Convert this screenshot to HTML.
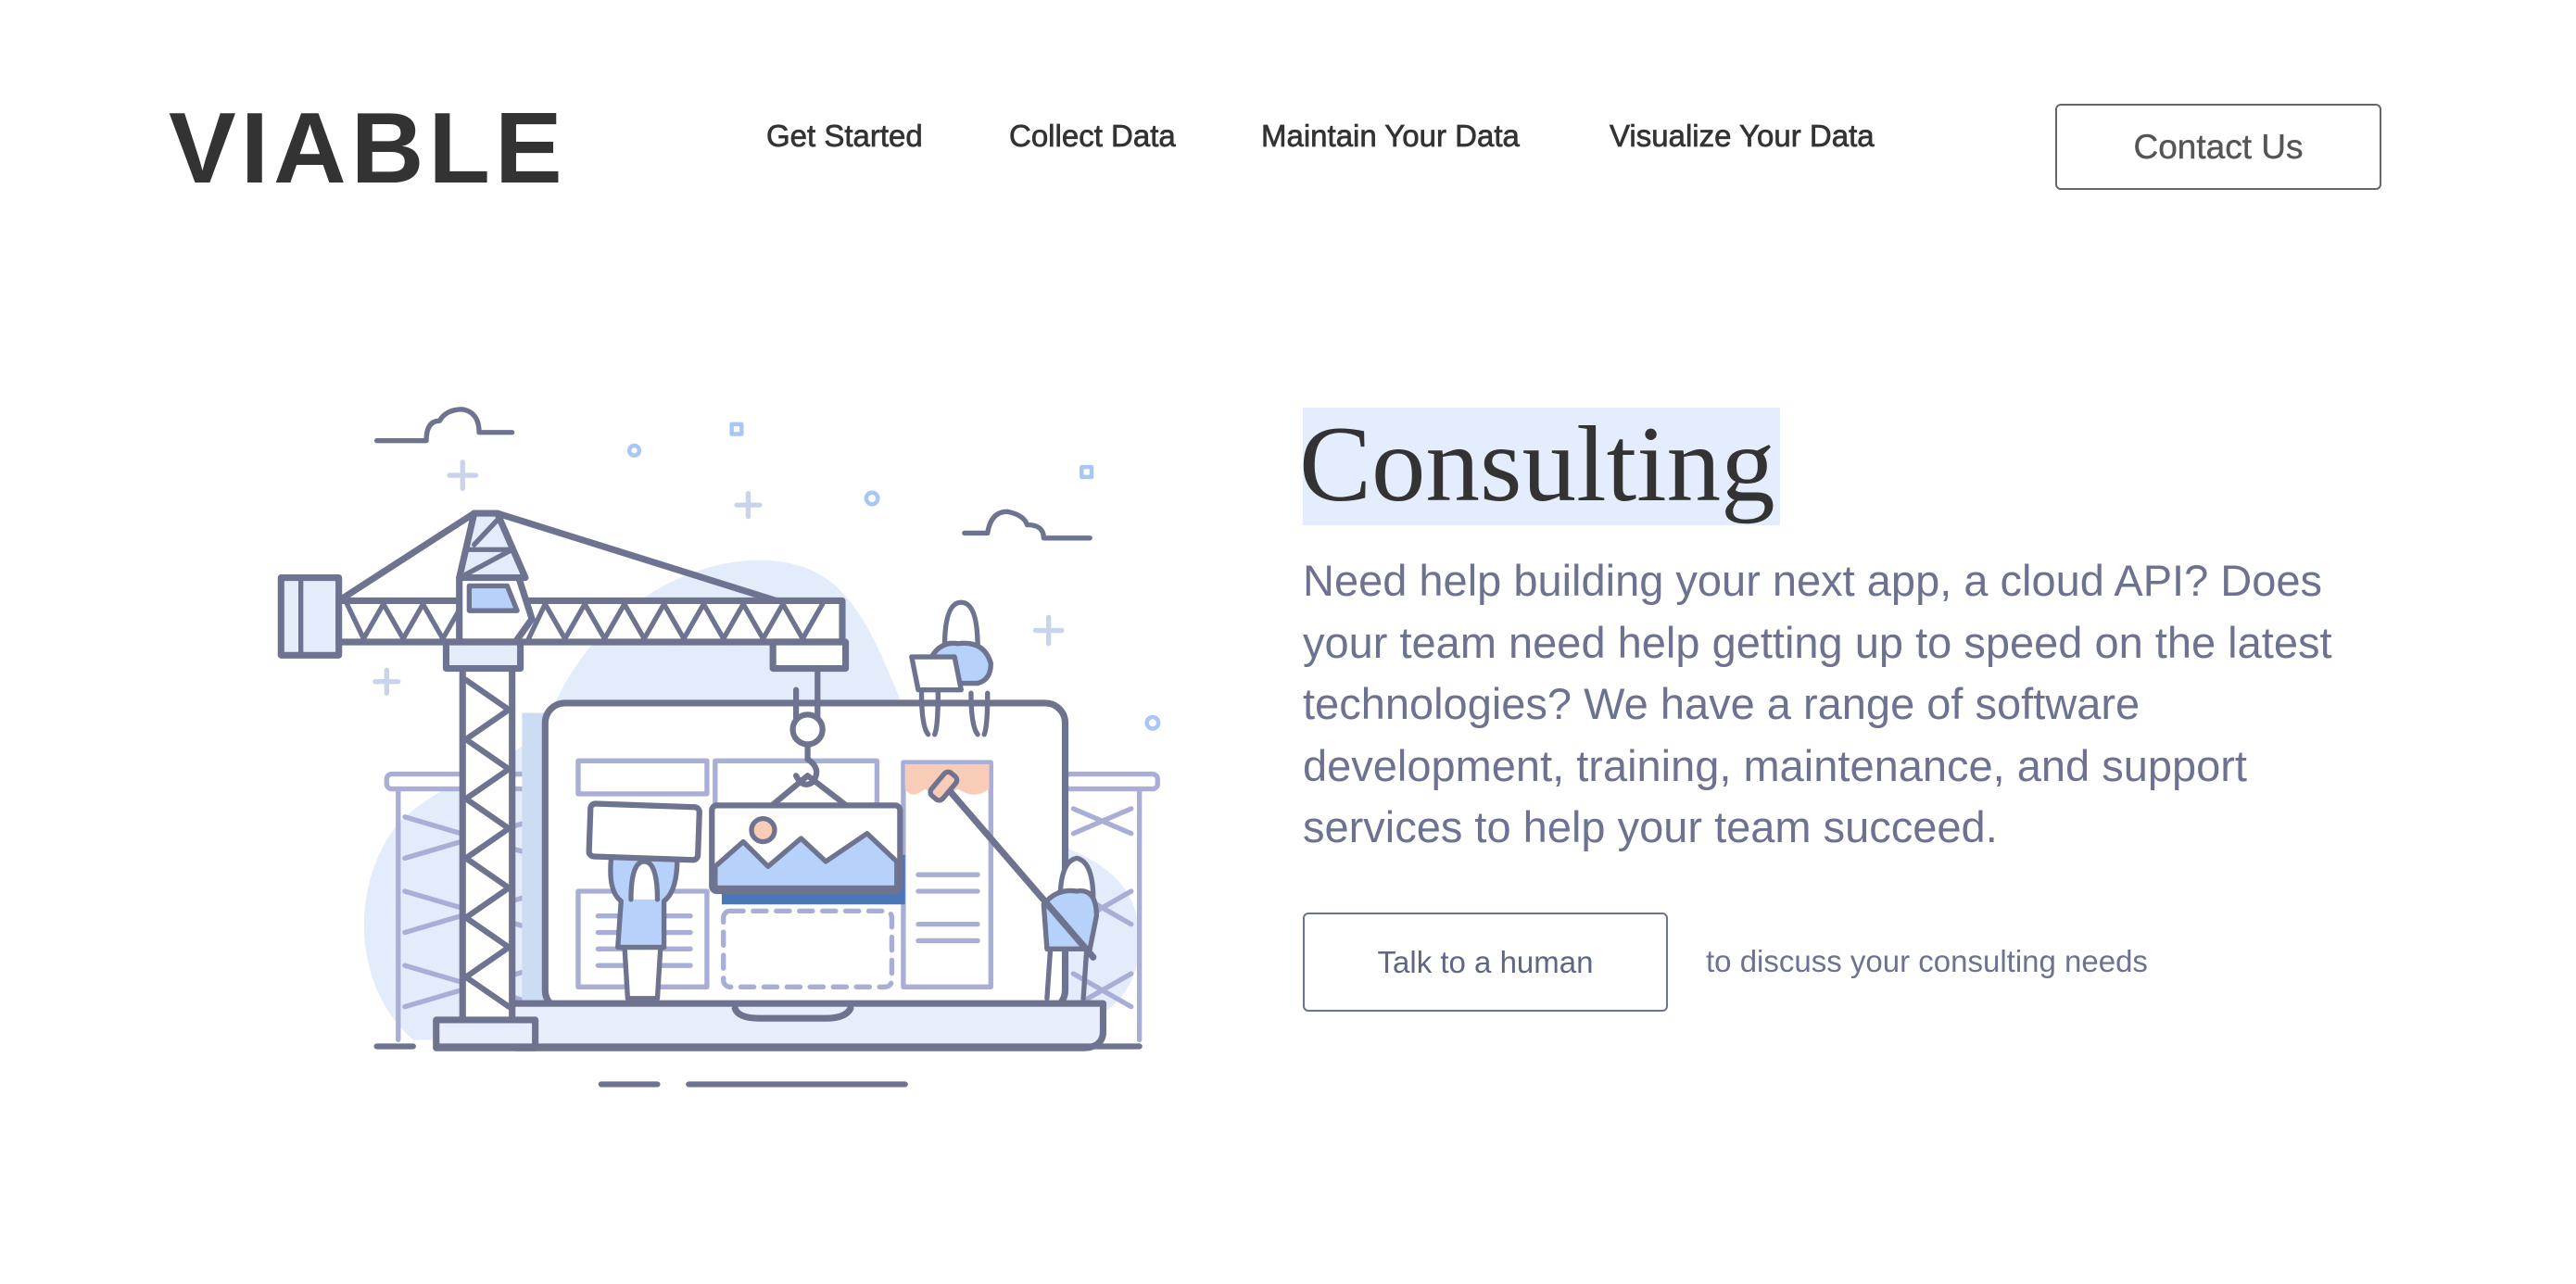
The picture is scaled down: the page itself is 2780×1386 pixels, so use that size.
<!DOCTYPE html>
<html><head><meta charset="utf-8"><style>
html,body{margin:0;padding:0;background:#fff;width:2780px;height:1386px;overflow:hidden;position:relative;font-family:"Liberation Sans",sans-serif}
.logo{position:absolute;left:182px;top:106px;font-size:109px;font-weight:bold;color:#333;letter-spacing:5px;line-height:1}
.nav{position:absolute;top:127px;font-size:33px;color:#333;line-height:40px;-webkit-text-stroke:0.7px #333}
.contact{position:absolute;left:2218px;top:112px;width:352px;height:93px;border:2px solid #666;border-radius:6px;box-sizing:border-box;color:#555;font-size:37px;text-align:center;line-height:89px;-webkit-text-stroke:0.4px #555}
.hl{position:absolute;left:1406px;top:440px;width:515px;height:127px;background:#e3edfd}
h1{position:absolute;left:1402px;top:432px;margin:0;font-family:"Liberation Serif",serif;font-weight:normal;font-size:117px;color:#333;line-height:140px}
.p{position:absolute;left:1406px;top:594px;font-size:47px;line-height:66.5px;color:#6c7290;white-space:nowrap}
.btn{position:absolute;left:1406px;top:985px;width:394px;height:107px;border:2px solid #6c7290;border-radius:6px;box-sizing:border-box;font-size:33px;color:#5f6584;text-align:center;line-height:103px}
.aside{position:absolute;left:1841px;top:1018px;font-size:33px;color:#6c7290;line-height:40px}
svg{position:absolute;left:0;top:0}
</style></head><body>
<div class="logo">VIABLE</div>
<div class="nav" style="left:827px">Get Started</div>
<div class="nav" style="left:1089px">Collect Data</div>
<div class="nav" style="left:1361px">Maintain Your Data</div>
<div class="nav" style="left:1737px">Visualize Your Data</div>
<div class="contact">Contact Us</div>
<div class="hl"></div>
<h1>Consulting</h1>
<div class="p">Need help building your next app, a cloud API? Does<br>your team need help getting up to speed on the latest<br>technologies? We have a range of software<br>development, training, maintenance, and support<br>services to help your team succeed.</div>
<div class="btn">Talk to a human</div>
<div class="aside">to discuss your consulting needs</div>

<svg width="2780" height="1386" viewBox="0 0 1560 778" fill="none" stroke-linecap="round" stroke-linejoin="round">
<path d="M330 440 C360 360 430 335 470 340 C520 345 530 390 560 460 C600 520 690 500 690 570 C690 620 640 630 600 630 L250 630 C215 600 210 540 240 500 C270 470 300 470 330 440Z" fill="#e3ecfb"/>
<g stroke="#a8aed6" stroke-width="3">
<rect x="234" y="469" width="100" height="9" rx="3" fill="#fff"/>
<rect x="645" y="469" width="56" height="9" rx="3" fill="#fff"/>
<path d="M241 478V630M690 478V630M245 495L330 520M245 520L330 495M245 540L330 565M245 565L330 540M245 585L330 610M245 610L330 585M650 490L685 505M650 505L685 490M650 540L685 560M650 560L685 540M650 590L685 610M650 610L685 590"/>
</g>
<rect x="316" y="432" width="18" height="178" fill="#ccdcf3"/>
<rect x="330" y="426" width="315" height="186" rx="12" fill="#fff" stroke="#6e7390" stroke-width="4"/>
<path d="M300 608 H668 V625 Q668 635 655 635 H315 Q300 635 300 625Z" fill="#e8eefb" stroke="#6e7390" stroke-width="4"/>
<path d="M445 611 Q447 617 460 617 H500 Q512 617 515 611" stroke="#6e7390" stroke-width="4"/>
<g stroke="#a8aed6" stroke-width="3">
<rect x="350" y="461" width="78" height="20"/>
<rect x="433" y="461" width="98" height="40"/>
<rect x="350" y="540" width="78" height="58"/>
<rect x="547" y="462" width="53" height="136"/>
<path d="M362 555H418M362 565H418M362 575H418M362 585H418M556 530H592M556 540H592M556 560H592M556 570H592"/>
<rect x="438" y="552" width="102" height="46" rx="4" stroke-dasharray="8 6"/>
</g>
<path d="M548 463H599V478Q590 485 580 478Q570 485 560 478Q552 485 548 478Z" fill="#f8ccb6"/>
<rect x="280" y="390" width="30" height="230" fill="#fff" stroke="#6e7390" stroke-width="4"/>
<path d="M282 412L308 430L282 448L308 466L282 484L308 502L282 520L308 538L282 556L308 574L282 592L308 610" stroke="#6e7390" stroke-width="3.5"/>
<rect x="264" y="618" width="60" height="17" fill="#e8eefb" stroke="#6e7390" stroke-width="4"/>
<rect x="170" y="350" width="35" height="47" fill="#e3ecfb" stroke="#6e7390" stroke-width="4"/>
<path d="M182 352V395" stroke="#6e7390" stroke-width="3"/>
<rect x="205" y="364" width="305" height="25" fill="#fff" stroke="#6e7390" stroke-width="4"/>
<path d="M210 366L220 387L232 366L244 387L256 366L268 387L280 366M320 387L330 366L342 387L354 366L366 387L378 366L390 387L402 366L414 387L426 366L438 387L450 366L462 387L474 366L486 387L498 366" stroke="#6e7390" stroke-width="3"/>
<path d="M205 364L287 311H301L470 364" stroke="#6e7390" stroke-width="4"/>
<path d="M287 311L278 350H318L301 311Z" fill="#e3ecfb" stroke="#6e7390" stroke-width="4"/>
<path d="M284 333H310M287 330L303 313M282 348L310 333" stroke="#6e7390" stroke-width="3"/>
<path d="M278 350H314L322 375L312 389H278Z" fill="#fff" stroke="#6e7390" stroke-width="4"/>
<path d="M284 355H307L313 370H284Z" fill="#b6d2fb" stroke="#6e7390" stroke-width="3"/>
<rect x="270" y="389" width="45" height="16" fill="#e3ecfb" stroke="#6e7390" stroke-width="4"/>
<rect x="468" y="389" width="44" height="16" fill="#fff" stroke="#6e7390" stroke-width="4"/>
<path d="M495 405V435M482 418V435" stroke="#6e7390" stroke-width="3.5"/>
<circle cx="489" cy="442" r="9" fill="#fff" stroke="#6e7390" stroke-width="3.5"/>
<path d="M489 451V460Q498 466 492 474Q486 478 482 470M489 470L465 490M489 470L515 490" stroke="#6e7390" stroke-width="3.5"/>
<rect x="437" y="518" width="111" height="30" fill="#4a77b8"/>
<rect x="431" y="488" width="114" height="52" rx="3" fill="#fff" stroke="#6e7390" stroke-width="3.5"/>
<path d="M433 525L450 510L465 525L485 508L500 522L525 505L543 522V538H433Z" fill="#b6d2fb" stroke="#6e7390" stroke-width="3"/>
<circle cx="462" cy="503" r="7" fill="#f8ccb6" stroke="#6e7390" stroke-width="3"/>
<path d="M378 572H400L398 605H380Z" fill="#fff" stroke="#6e7390" stroke-width="3"/>
<path d="M370 520Q368 540 376 546L374 574H402L402 546Q410 540 410 520" fill="#b6d2fb" stroke="#6e7390" stroke-width="3"/>
<path d="M382 545Q382 522 390 522Q398 522 398 545" fill="#fff" stroke="#6e7390" stroke-width="3"/>
<rect x="357" y="488" width="66" height="32" rx="3" fill="#fff" stroke="#6e7390" stroke-width="3.5" transform="rotate(2 390 504)"/>
<path d="M572 392Q572 365 582 365Q592 365 592 392" fill="#fff" stroke="#6e7390" stroke-width="3"/>
<path d="M562 402Q568 388 580 390Q596 388 600 402Q600 412 592 414H565Z" fill="#b6d2fb" stroke="#6e7390" stroke-width="3"/>
<path d="M552 398H578L582 418H556Z" fill="#fff" stroke="#6e7390" stroke-width="3"/>
<path d="M558 420Q558 440 562 445M568 420Q568 440 566 445M588 420Q588 440 592 445M598 420Q598 440 596 445" stroke="#6e7390" stroke-width="3"/>
<path d="M642 545Q642 522 652 520Q662 522 662 545" fill="#fff" stroke="#6e7390" stroke-width="3"/>
<path d="M632 548Q640 538 652 540Q664 538 664 555L660 575H634Z" fill="#b6d2fb" stroke="#6e7390" stroke-width="3"/>
<path d="M636 576L634 605M658 576L656 605" stroke="#6e7390" stroke-width="3"/>
<path d="M574 478L662 580" stroke="#6e7390" stroke-width="4"/>
<rect x="562" y="472" width="18" height="9" rx="3" fill="#f8ccb6" stroke="#6e7390" stroke-width="3" transform="rotate(-50 571 476)"/>
<path d="M228 634H250M264 634H690M364 657H398M417 657H548" stroke="#6e7390" stroke-width="3.5"/>
<path d="M228 267H258Q258 255 266 255Q270 248 280 248Q290 250 290 262H310" stroke="#6e7390" stroke-width="3"/>
<path d="M584 323H598Q600 310 610 310Q620 312 622 318Q632 318 632 326H660" stroke="#6e7390" stroke-width="3"/>
<g stroke="#c8d4ee" stroke-width="3"><path d="M280 280V296M272 288H288M453 299V313M446 306H460M635 374V390M627 382H643M234 406V420M227 413H241"/></g>
<g stroke="#a9c6f5" stroke-width="2.5"><circle cx="384" cy="273" r="3"/><circle cx="528" cy="302" r="3.5"/><circle cx="698" cy="438" r="3.5"/><rect x="443" y="257" width="6" height="6"/><rect x="655" y="283" width="6" height="6"/></g>
</svg>
</body></html>
